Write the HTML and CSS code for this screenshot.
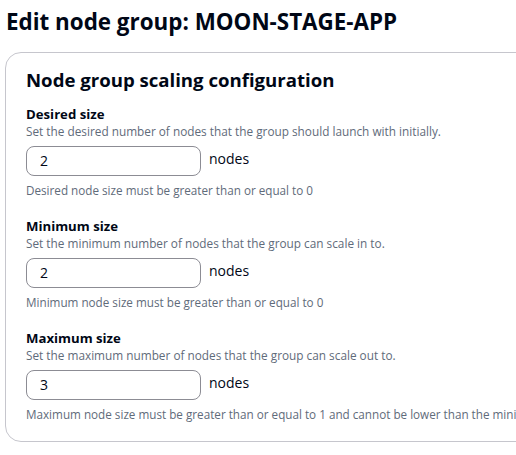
FILE: index.html
```html
<!DOCTYPE html>
<html>
<head>
<meta charset="utf-8">
<link rel="stylesheet" href="styles.css">
</head>
<body>
<div class="page">
  <h1 class="title">Edit node group: MOON-STAGE-APP</h1>
  <div class="card">
    <h2 class="card-title">Node group scaling configuration</h2>
    <div class="field">
      <div class="label">Desired size</div>
      <div class="desc">Set the desired number of nodes that the group should launch with initially.</div>
      <div class="control">
        <div class="input">2</div>
        <span class="unit">nodes</span>
      </div>
      <div class="hint">Desired node size must be greater than or equal to 0</div>
    </div>
    <div class="field">
      <div class="label">Minimum size</div>
      <div class="desc">Set the minimum number of nodes that the group can scale in to.</div>
      <div class="control">
        <div class="input">2</div>
        <span class="unit">nodes</span>
      </div>
      <div class="hint">Minimum node size must be greater than or equal to 0</div>
    </div>
    <div class="field">
      <div class="label">Maximum size</div>
      <div class="desc">Set the maximum number of nodes that the group can scale out to.</div>
      <div class="control">
        <div class="input">3</div>
        <span class="unit">nodes</span>
      </div>
      <div class="hint">Maximum node size must be greater than or equal to 1 and cannot be lower than the minimum size</div>
    </div>
  </div>
</div>
</body>
</html>
```
FILE: styles.css
```css
html, body {
  margin: 0;
  padding: 0;
  background: #ffffff;
  overflow: hidden;
}
body {
  font-family: "Open Sans", "Noto Sans", Arial, sans-serif;
  color: #000716;
}
.page {
  padding: 8px 0 0 5px;
  width: 620px;
}
.title {
  margin: 0 0 0 1px;
  font-size: 22.4px;
  line-height: 28px;
  font-weight: 700;
  color: #000716;
  white-space: nowrap;
}
.card {
  margin-top: 16px;
  border: 1px solid #c6c6cd;
  border-radius: 16px;
  padding: 15px 20px 19px 20px;
  display: flex;
  flex-direction: column;
  gap: 19px;
}
.card-title {
  margin: 0 0 -6px 0;
  font-size: 18.6px;
  line-height: 24px;
  font-weight: 700;
  white-space: nowrap;
}
.field {
  display: flex;
  flex-direction: column;
}
.label {
  font-size: 13.2px;
  line-height: 18px;
  font-weight: 700;
}
.desc {
  font-size: 11.8px;
  line-height: 16px;
  color: #5f6b7a;
  white-space: nowrap;
}
.control {
  display: flex;
  align-items: flex-start;
  gap: 8px;
  margin-top: 7px;
}
.input {
  width: 160px;
  height: 28px;
  border: 1px solid #8c8c94;
  border-radius: 8px;
  padding: 0 0 0 13px;
  font-size: 14px;
  line-height: 28px;
  box-sizing: content-box;
}
.unit {
  font-size: 14px;
  line-height: 20px;
  padding-top: 3px;
}
.hint {
  margin-top: 6px;
  font-size: 11.7px;
  line-height: 16px;
  color: #5f6b7a;
  white-space: nowrap;
}
```
